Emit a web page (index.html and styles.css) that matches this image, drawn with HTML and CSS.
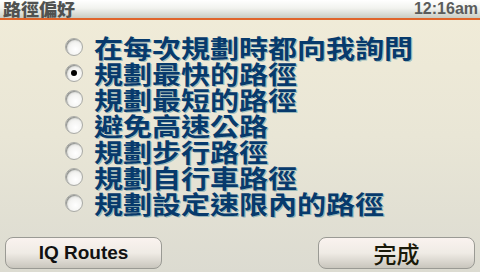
FILE: index.html
```html
<!DOCTYPE html>
<html>
<head>
<meta charset="utf-8">
<link rel="stylesheet" href="styles.css">
</head>
<body>
<div class="screen">
  <div class="header">
    <span class="title">路徑偏好</span>
    <span class="time">12:16am</span>
  </div>
  <ul class="options">
    <li class="option"><span class="radio"></span><span class="label">在每次規劃時都向我詢問</span></li>
    <li class="option"><span class="radio checked"></span><span class="label">規劃最快的路徑</span></li>
    <li class="option"><span class="radio"></span><span class="label">規劃最短的路徑</span></li>
    <li class="option"><span class="radio"></span><span class="label">避免高速公路</span></li>
    <li class="option"><span class="radio"></span><span class="label">規劃步行路徑</span></li>
    <li class="option"><span class="radio"></span><span class="label">規劃自行車路徑</span></li>
    <li class="option"><span class="radio"></span><span class="label">規劃設定速限內的路徑</span></li>
  </ul>
  <div class="footer">
    <div class="btn btn-en">IQ Routes</div>
    <div class="btn btn-cjk">完成</div>
  </div>
</div>
</body>
</html>
```
FILE: styles.css
```css
html, body {
  margin: 0;
  padding: 0;
}
body {
  width: 480px;
  height: 272px;
  overflow: hidden;
}
.screen {
  width: 480px;
  height: 272px;
  display: flex;
  flex-direction: column;
  background: linear-gradient(to bottom, #f1ecd8 0%, #e9e6d6 50%, #dcdbd1 100%);
}
.header {
  height: 18px;
  border-bottom: 2px solid #e0642a;
  background: linear-gradient(to bottom, #ffffff 0%, #f2f3ef 45%, #c9cdc3 100%);
  display: flex;
  justify-content: space-between;
  align-items: center;
  padding: 0 2px 0 3px;
  flex: none;
}
.title {
  font-family: "Noto Sans CJK TC", sans-serif;
  font-weight: 900;
  font-size: 17px;
  line-height: 18px;
  color: #505251;
  transform: scaleX(1.06);
  transform-origin: left center;
}
.time {
  font-family: "Liberation Sans", Arial, sans-serif;
  font-weight: 700;
  font-size: 16px;
  line-height: 18px;
  color: #5a5c5b;
}
.options {
  list-style: none;
  margin: 0;
  padding: 14px 0 0 65px;
  display: flex;
  flex-direction: column;
}
.option {
  height: 26px;
  display: flex;
  align-items: center;
  gap: 11px;
}
.radio {
  width: 18px;
  height: 18px;
  border-radius: 50%;
  box-sizing: border-box;
  border: 1px solid #a9aaa6;
  background: radial-gradient(circle at 60% 65%, #ffffff 0%, #f4f4f2 45%, #cfd0cc 100%);
  box-shadow: inset 1px 1px 1px #8e908c;
  position: relative;
  flex: none;
}
.radio.checked::after {
  content: "";
  position: absolute;
  left: 5px;
  top: 5px;
  width: 6px;
  height: 6px;
  border-radius: 50%;
  background: #000;
}
.label {
  font-family: "Noto Sans CJK TC", sans-serif;
  font-weight: 700;
  font-size: 25px;
  line-height: 26px;
  color: #073a6c;
  text-shadow: 1px 1px 0 rgba(60, 130, 150, 0.45);
  transform: scaleX(1.16);
  transform-origin: left center;
  white-space: nowrap;
}
.footer {
  margin-top: auto;
  display: flex;
  justify-content: space-between;
  padding: 0 5px 3px 5px;
}
.btn {
  width: 157px;
  height: 32px;
  box-sizing: border-box;
  border: 1px solid #9a9a94;
  border-radius: 8px;
  background: linear-gradient(to bottom, #faf3ef 0%, #efebe5 50%, #c9c6bd 100%);
  display: flex;
  align-items: center;
  justify-content: center;
  color: #111;
}
.btn-en {
  font-family: "Liberation Sans", Arial, sans-serif;
  font-weight: 700;
  font-size: 19px;
}
.btn-cjk {
  font-family: "Noto Sans CJK TC", sans-serif;
  font-weight: 500;
  font-size: 23px;
  color: #1a1a0a;
}
```
